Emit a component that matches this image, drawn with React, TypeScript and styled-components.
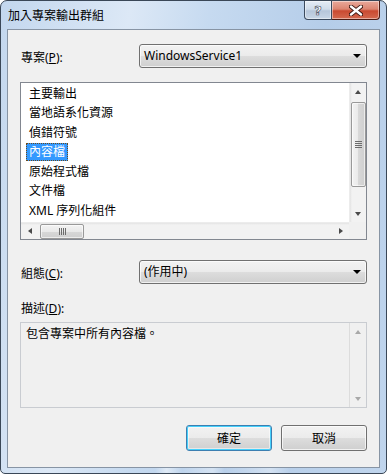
import React from "react";
import styled, { createGlobalStyle } from "styled-components";

const GlobalStyle = createGlobalStyle`
  html, body {
    margin: 0;
    padding: 0;
    background: #ffffff;
  }
  body {
    font-family: "Noto Sans", "Noto Sans CJK TC", sans-serif;
    font-size: 12px;
    color: #000000;
  }
`;

const Window = styled.div`
  width: 387px;
  height: 474px;
  box-sizing: border-box;
  border: 1px solid #3a4757;
  border-radius: 7px 7px 5px 5px;
  background: linear-gradient(
    100deg,
    #c3d7ee 0%,
    #dce8f6 28%,
    #c6daf0 45%,
    #b5cde9 70%,
    #c0d5ed 100%
  );
  display: flex;
  flex-direction: column;
  overflow: hidden;
`;

const TitleBar = styled.div`
  height: 28px;
  display: flex;
  align-items: flex-start;
  flex-shrink: 0;
`;

const Title = styled.div`
  flex: 1;
  padding: 6px 0 0 7px;
  line-height: 16px;
  font-family: "Noto Sans CJK TC", sans-serif;
  font-size: 12px;
  color: #000;
`;

const CaptionButtons = styled.div`
  display: flex;
  margin-right: 6px;
`;

const CaptionButton = styled.div<{ $close?: boolean }>`
  width: ${(p) => (p.$close ? 48 : 28)}px;
  height: 19px;
  box-sizing: border-box;
  border: 1px solid ${(p) => (p.$close ? "#4b1c14" : "#3b4a5e")};
  border-top: none;
  border-radius: ${(p) => (p.$close ? "0 0 4px 0" : "0 0 0 4px")};
  ${(p) => (p.$close ? "border-left: none;" : "")}
  background: ${(p) =>
    p.$close
      ? "linear-gradient(#e9a99b 0%, #dc8571 45%, #c94a31 55%, #d4694f 100%)"
      : "linear-gradient(#e4ecf5 0%, #d0dcea 45%, #b6c6da 55%, #c8d6e6 100%)"};
  box-shadow: inset 0 0 0 1px rgba(255, 255, 255, 0.45);
  display: flex;
  align-items: center;
  justify-content: center;
`;

const HelpGlyph = styled.span`
  font-family: "DejaVu Sans", sans-serif;
  font-weight: bold;
  font-size: 13px;
  line-height: 13px;
  color: #ffffff;
  -webkit-text-stroke: 0.6px #3a4656;
  margin-top: 1px;
`;

const Client = styled.div`
  margin: 0 6px;
  height: 439px;
  box-sizing: border-box;
  border: 1px solid #8794a4;
  background: #f0f0f0;
  padding: 14px 12px 0 12px;
  display: flex;
  flex-direction: column;
  flex-shrink: 0;
`;

const BottomFrame = styled.div`
  flex: 1;
  background: linear-gradient(
    90deg,
    transparent 0%,
    transparent 40%,
    rgba(255, 255, 255, 0.5) 43%,
    transparent 47%,
    rgba(255, 255, 255, 0.4) 55%,
    transparent 58%,
    rgba(255, 255, 255, 0.4) 70%,
    transparent 75%
  );
`;

const FieldRow = styled.div<{ $top?: number }>`
  display: grid;
  grid-template-columns: 119px 1fr;
  align-items: center;
  margin-top: ${(p) => p.$top ?? 0}px;
`;

const Label = styled.div<{ $top?: number }>`
  line-height: 14px;
  padding-top: ${(p) => p.$top ?? 0}px;
  margin-left: 1px;
`;

const Combo = styled.div`
  height: 24px;
  box-sizing: border-box;
  border: 1px solid #707070;
  border-radius: 3px;
  background: linear-gradient(#f2f2f2 0%, #ebebeb 50%, #dddddd 50%, #cfcfcf 100%);
  box-shadow: inset 0 0 0 1px rgba(255, 255, 255, 0.7);
  display: flex;
  align-items: center;
  justify-content: space-between;
  padding: 0 4px 0 4px;
`;

const ComboText = styled.span`
  line-height: 16px;
`;

const DropArrow = styled.span`
  width: 0;
  height: 0;
  border-left: 4px solid transparent;
  border-right: 4px solid transparent;
  border-top: 4px solid #000;
  margin-right: 1px;
`;

const ListBox = styled.div`
  margin-top: 14px;
  height: 158px;
  box-sizing: border-box;
  border: 1px solid #828790;
  background: #ffffff;
  display: grid;
  grid-template-columns: 1fr 17px;
  grid-template-rows: 1fr 17px;
  overflow: hidden;
`;

const Items = styled.div`
  padding-top: 1px;
  overflow: hidden;
`;

const Item = styled.div`
  height: 19.5px;
  display: flex;
  align-items: center;
  padding-left: 5px;
`;

const ItemText = styled.span<{ $selected?: boolean }>`
  height: 18px;
  line-height: 18px;
  padding: 0 3px;
  box-sizing: border-box;
  font-family: "Noto Sans", "Noto Sans CJK TC", sans-serif;
  white-space: nowrap;
  background: ${(p) => (p.$selected ? "#3399ff" : "transparent")};
  color: ${(p) => (p.$selected ? "#ffffff" : "#000000")};
  outline: ${(p) => (p.$selected ? "1px dotted #6a4a1e" : "none")};
  outline-offset: -1px;
`;

const VScroll = styled.div<{ $disabled?: boolean }>`
  display: flex;
  flex-direction: column;
  align-items: center;
  background: ${(p) =>
    p.$disabled
      ? "#f0f0f0"
      : "linear-gradient(90deg, #e3e3e3 0px, #f2f2f2 2px, #f2f2f2 100%)"};
  border-left: 1px solid ${(p) => (p.$disabled ? "#dcdcdc" : "#ececec")};
`;

const HScroll = styled.div`
  display: flex;
  align-items: center;
  background: linear-gradient(#e3e3e3 0px, #f2f2f2 2px, #f2f2f2 100%);
  border-top: 1px solid #ececec;
`;

const Corner = styled.div`
  background: #f0f0f0;
`;

const ArrowCell = styled.div<{ $horizontal?: boolean }>`
  width: ${(p) => (p.$horizontal ? 17 : 16)}px;
  height: ${(p) => (p.$horizontal ? 16 : 17)}px;
  display: flex;
  align-items: center;
  justify-content: center;
  flex-shrink: 0;
`;

const Tri = styled.span<{ $dir: "up" | "down" | "left" | "right"; $color?: string }>`
  width: 0;
  height: 0;
  ${(p) => {
    const c = p.$color ?? "#4a4a4a";
    switch (p.$dir) {
      case "up":
        return `border-left:3.5px solid transparent;border-right:3.5px solid transparent;border-bottom:4px solid ${c};`;
      case "down":
        return `border-left:3.5px solid transparent;border-right:3.5px solid transparent;border-top:4px solid ${c};`;
      case "left":
        return `border-top:3.5px solid transparent;border-bottom:3.5px solid transparent;border-right:4px solid ${c};`;
      default:
        return `border-top:3.5px solid transparent;border-bottom:3.5px solid transparent;border-left:4px solid ${c};`;
    }
  }}
`;

const VThumb = styled.div`
  width: 15px;
  height: 85px;
  margin-top: 2px;
  box-sizing: border-box;
  border: 1px solid #999999;
  border-radius: 2px;
  background: linear-gradient(90deg, #f3f3f3 0%, #e9e9e9 50%, #d8d8d8 50%, #cfcfcf 100%);
  box-shadow: inset 0 0 0 1px rgba(255, 255, 255, 0.6);
  display: flex;
  align-items: center;
  justify-content: center;
`;

const HThumb = styled.div`
  width: 44px;
  height: 15px;
  margin-left: 2px;
  box-sizing: border-box;
  border: 1px solid #999999;
  border-radius: 2px;
  background: linear-gradient(#f3f3f3 0%, #e9e9e9 50%, #d8d8d8 50%, #cfcfcf 100%);
  box-shadow: inset 0 0 0 1px rgba(255, 255, 255, 0.6);
  display: flex;
  align-items: center;
  justify-content: center;
`;

const Spacer = styled.div`
  flex: 1;
`;

const DescBox = styled.div`
  margin-top: 6px;
  height: 86px;
  box-sizing: border-box;
  border: 1px solid #c9ccd1;
  background: #f0f0f0;
  display: grid;
  grid-template-columns: 1fr 17px;
`;

const DescText = styled.div`
  padding: 3px 5px;
  line-height: 16px;
`;

const ButtonRow = styled.div`
  margin-top: 17px;
  display: flex;
  justify-content: flex-end;
  gap: 9px;
`;

const DialogButton = styled.button<{ $default?: boolean }>`
  width: 86px;
  height: 26px;
  box-sizing: border-box;
  border: 1px solid ${(p) => (p.$default ? "#3c7fb1" : "#707070")};
  border-radius: 3px;
  background: linear-gradient(#f2f2f2 0%, #ebebeb 50%, #dddddd 50%, #cfcfcf 100%);
  box-shadow: ${(p) =>
    p.$default
      ? "inset 0 0 0 1px #45d0fb, inset 0 0 0 2px rgba(255,255,255,0.5)"
      : "inset 0 0 0 1px rgba(255,255,255,0.7)"};
  font-family: "Noto Sans CJK TC", sans-serif;
  font-size: 12px;
  color: #000;
  padding: 0;
  line-height: 16px;
`;

function CloseGlyph() {
  return (
    <svg width="14" height="11" viewBox="0 0 14 11">
      <path
        d="M2 1.5 L12 9.5 M12 1.5 L2 9.5"
        stroke="#3b1610"
        strokeWidth="4.2"
        strokeLinecap="round"
      />
      <path
        d="M2 1.5 L12 9.5 M12 1.5 L2 9.5"
        stroke="#ffffff"
        strokeWidth="2.4"
        strokeLinecap="round"
      />
    </svg>
  );
}

function VGrip() {
  return (
    <svg width="7" height="7" viewBox="0 0 7 7">
      {[0.5, 2.5, 4.5, 6.5].map((y) => (
        <line key={y} x1="0" x2="7" y1={y} y2={y} stroke="#6c6c6c" strokeWidth="1" />
      ))}
    </svg>
  );
}

function HGrip() {
  return (
    <svg width="7" height="7" viewBox="0 0 7 7">
      {[0.5, 2.5, 4.5, 6.5].map((x) => (
        <line key={x} y1="0" y2="7" x1={x} x2={x} stroke="#6c6c6c" strokeWidth="1" />
      ))}
    </svg>
  );
}

const items = [
  "主要輸出",
  "當地語系化資源",
  "偵錯符號",
  "內容檔",
  "原始程式檔",
  "文件檔",
  "XML 序列化組件",
];

export default function App() {
  return (
    <>
      <GlobalStyle />
      <Window>
        <TitleBar>
          <Title>加入專案輸出群組</Title>
          <CaptionButtons>
            <CaptionButton>
              <HelpGlyph>?</HelpGlyph>
            </CaptionButton>
            <CaptionButton $close>
              <CloseGlyph />
            </CaptionButton>
          </CaptionButtons>
        </TitleBar>
        <Client>
          <FieldRow>
            <Label $top={3}>
              專案(<u>P</u>):
            </Label>
            <Combo>
              <ComboText>WindowsService1</ComboText>
              <DropArrow />
            </Combo>
          </FieldRow>

          <ListBox>
            <Items>
              {items.map((t) => (
                <Item key={t}>
                  <ItemText $selected={t === "內容檔"}>{t}</ItemText>
                </Item>
              ))}
            </Items>
            <VScroll>
              <ArrowCell>
                <Tri $dir="up" />
              </ArrowCell>
              <VThumb>
                <VGrip />
              </VThumb>
              <Spacer />
              <ArrowCell>
                <Tri $dir="down" />
              </ArrowCell>
            </VScroll>
            <HScroll>
              <ArrowCell $horizontal>
                <Tri $dir="left" />
              </ArrowCell>
              <HThumb>
                <HGrip />
              </HThumb>
              <Spacer />
              <ArrowCell $horizontal>
                <Tri $dir="right" />
              </ArrowCell>
            </HScroll>
            <Corner />
          </ListBox>

          <FieldRow $top={20}>
            <Label $top={3}>
              組態(<u>C</u>):
            </Label>
            <Combo>
              <ComboText>(作用中)</ComboText>
              <DropArrow />
            </Combo>
          </FieldRow>

          <Label style={{ marginTop: 18 }}>
            描述(<u>D</u>):
          </Label>
          <DescBox>
            <DescText>包含專案中所有內容檔。</DescText>
            <VScroll $disabled>
              <ArrowCell>
                <Tri $dir="up" $color="#a8a8a8" />
              </ArrowCell>
              <Spacer />
              <ArrowCell>
                <Tri $dir="down" $color="#a8a8a8" />
              </ArrowCell>
            </VScroll>
          </DescBox>

          <ButtonRow>
            <DialogButton $default>確定</DialogButton>
            <DialogButton>取消</DialogButton>
          </ButtonRow>
        </Client>
        <BottomFrame />
      </Window>
    </>
  );
}
